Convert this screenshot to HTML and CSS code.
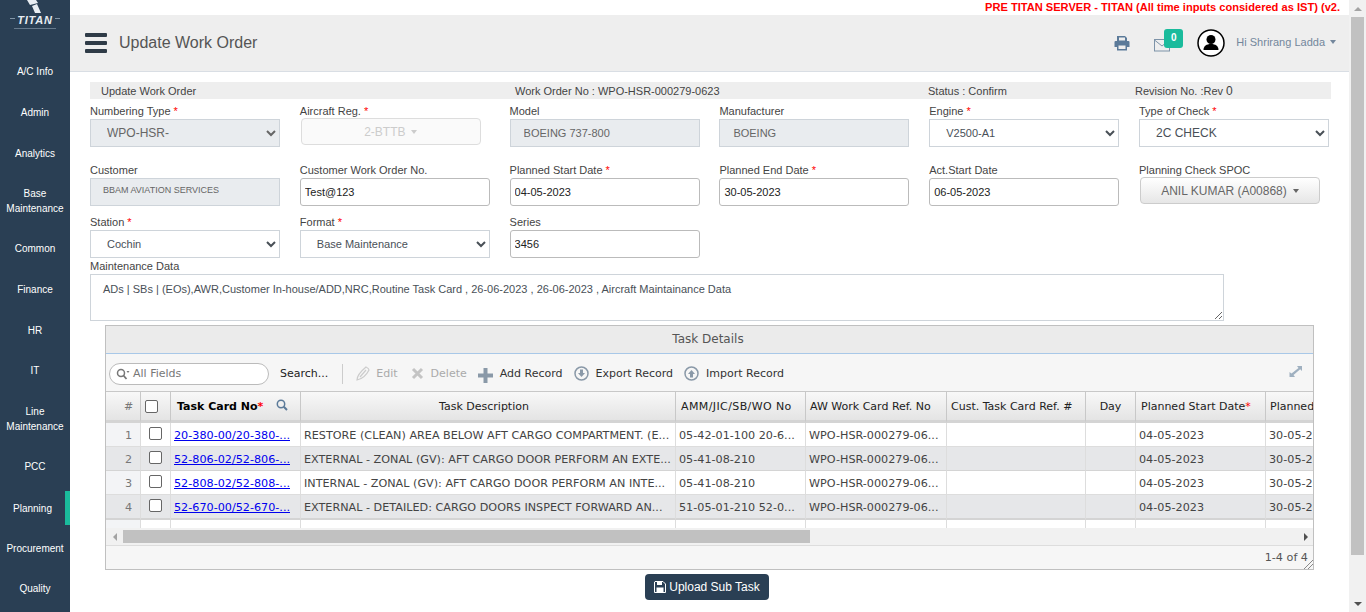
FILE: index.html
```html
<!DOCTYPE html>
<html lang="en">
<head>
<meta charset="UTF-8">
<title>Update Work Order</title>
<link rel="stylesheet" href="styles.css">
</head>
<body>
<div class="app">
  <aside class="sidebar">
    <div class="logo">
      <svg class="logo-mark" width="14" height="13" viewBox="0 0 14 13"><path d="M0 0h9l2 3-8 2zM5 6l5-2 4 9H8z" fill="#e8edf2"/></svg>
      <div class="logo-text">TITAN</div>
      <div class="logo-tag"></div>
    </div>
    <nav class="nav">
      <a class="nav-item">A/C Info</a>
      <a class="nav-item">Admin</a>
      <a class="nav-item">Analytics</a>
      <a class="nav-item nav-double">Base<br>Maintenance</a>
      <a class="nav-item">Common</a>
      <a class="nav-item">Finance</a>
      <a class="nav-item">HR</a>
      <a class="nav-item">IT</a>
      <a class="nav-item nav-double">Line<br>Maintenance</a>
      <a class="nav-item">PCC</a>
      <a class="nav-item active">Planning</a>
      <a class="nav-item">Procurement</a>
      <a class="nav-item">Quality</a>
    </nav>
  </aside>

  <main class="main">
    <div class="server-note">PRE TITAN SERVER - TITAN (All time inputs considered as IST) (v2.0)</div>
    <header class="topbar">
      <div class="burger"><span></span><span></span><span></span></div>
      <h1 class="page-title">Update Work Order</h1>
      <div class="topbar-right">
        <svg class="print-icon" width="16" height="16" viewBox="0 0 16 16"><path d="M3 1h8l2 2v3H3z" fill="#5b7a99"/><rect x="5" y="2.500" width="6" height="3" fill="#eee"/><path d="M1.500 6h13a1 1 0 0 1 1 1v5h-15V7a1 1 0 0 1 1-1z" fill="#5b7a99"/><rect x="3" y="10" width="10" height="5.500" fill="#5b7a99"/><rect x="4.500" y="10.500" width="7" height="3.500" fill="#eee"/></svg>
        <div class="mail">
          <svg width="16" height="13" viewBox="0 0 16 13"><rect x="0.500" y="0.500" width="15" height="11.500" fill="none" stroke="#7d93a8"/><path d="M0.500 1l7.500 6 7.500-6" fill="none" stroke="#7d93a8"/></svg>
          <span class="badge">0</span>
        </div>
        <svg class="avatar" width="28" height="28" viewBox="0 0 28 28"><circle cx="14" cy="14" r="13" fill="#fff" stroke="#000" stroke-width="1.500"/><circle cx="14" cy="10.500" r="4.500" fill="#000"/><path d="M6.500 21c0-4 3-6 7.500-6s7.500 2 7.500 6z" fill="#000"/></svg>
        <span class="user">Hi Shrirang Ladda</span><span class="caret"></span>
      </div>
    </header>

    <div class="content">
      <div class="info-bar">
        <span>Update Work Order</span>
        <span>Work Order No : WPO-HSR-000279-0623</span>
        <span>Status : Confirm</span>
        <span>Revision No. :Rev <span class="rev">0</span></span>
      </div>

      <div class="form-grid">
        <div class="field">
          <label>Numbering Type <i>*</i></label>
          <select class="control big" disabled><option>WPO-HSR-</option></select>
        </div>
        <div class="field">
          <label>Aircraft Reg. <i>*</i></label>
          <div class="picker picker-off">2-BTTB<span class="caret"></span></div>
        </div>
        <div class="field">
          <label>Model</label>
          <input class="control pad-lg" value="BOEING 737-800" disabled>
        </div>
        <div class="field">
          <label>Manufacturer</label>
          <input class="control pad-lg" value="BOEING" disabled>
        </div>
        <div class="field">
          <label>Engine <i>*</i></label>
          <select class="control"><option>V2500-A1</option></select>
        </div>
        <div class="field">
          <label>Type of Check <i>*</i></label>
          <select class="control big"><option>2C CHECK</option></select>
        </div>

        <div class="field">
          <label>Customer</label>
          <input class="control small" value="BBAM AVIATION SERVICES" disabled>
        </div>
        <div class="field">
          <label>Customer Work Order No.</label>
          <input class="control dark" value="Test@123">
        </div>
        <div class="field">
          <label>Planned Start Date <i>*</i></label>
          <input class="control dark" value="04-05-2023">
        </div>
        <div class="field">
          <label>Planned End Date <i>*</i></label>
          <input class="control dark" value="30-05-2023">
        </div>
        <div class="field">
          <label>Act.Start Date</label>
          <input class="control dark" value="06-05-2023">
        </div>
        <div class="field">
          <label>Planning Check SPOC</label>
          <div class="picker">ANIL KUMAR (A00868)<span class="caret"></span></div>
        </div>

        <div class="field">
          <label>Station <i>*</i></label>
          <select class="control"><option>Cochin</option></select>
        </div>
        <div class="field">
          <label>Format <i>*</i></label>
          <select class="control"><option>Base Maintenance</option></select>
        </div>
        <div class="field">
          <label>Series</label>
          <input class="control dark" value="3456">
        </div>
      </div>

      <div class="data-field">
        <label>Maintenance Data</label>
        <textarea class="data-text">ADs | SBs | (EOs),AWR,Customer In-house/ADD,NRC,Routine Task Card , 26-06-2023 , 26-06-2023 , Aircraft Maintainance Data</textarea>
      </div>

      <section class="panel">
        <div class="panel-title">Task Details</div>
        <div class="toolbar">
          <div class="search">
            <svg width="14" height="12" viewBox="0 0 14 12"><circle cx="5" cy="5" r="3.500" fill="none" stroke="#777" stroke-width="1.500"/><path d="M7.500 7.500L10.500 11" stroke="#777" stroke-width="1.800"/><path d="M10.500 3h3l-1.500 2z" fill="#777"/></svg>
            <span>All Fields</span>
          </div>
          <span class="tool-search">Search...</span>
          <span class="tool-sep"></span>
          <span class="tool off tool-edit">
            <svg width="14" height="15" viewBox="0 0 14 15"><path d="M1 14c0-4 3-8 9-13 2 1 3 2 3 3-3 6-7 9-12 10zM4 11l6-7" fill="none" stroke="#ccc" stroke-width="1.200"/></svg>Edit
          </span>
          <span class="tool off">
            <svg width="13" height="13" viewBox="0 0 13 13"><path d="M2 2l9 9M11 2l-9 9" stroke="#c4c4c4" stroke-width="3"/></svg>Delete
          </span>
          <span class="tool">
            <svg class="plus" width="15" height="15" viewBox="0 0 15 15"><path d="M7.500 0v15M0 7.500h15" stroke="#8a99a8" stroke-width="4"/></svg>Add Record
          </span>
          <span class="tool">
            <svg width="15" height="15" viewBox="0 0 15 15"><circle cx="7.500" cy="7.500" r="6.500" fill="none" stroke="#8a99a8" stroke-width="1.500"/><path d="M6 3.500h3V7h2l-3.500 4L4 7h2z" fill="#8a99a8"/></svg>Export Record
          </span>
          <span class="tool">
            <svg width="15" height="15" viewBox="0 0 15 15"><circle cx="7.500" cy="7.500" r="6.500" fill="none" stroke="#8a99a8" stroke-width="1.500"/><path d="M6 11.500h3V8h2L7.500 4 4 8h2z" fill="#8a99a8"/></svg>Import Record
          </span>
          <svg class="expand" width="15" height="14" viewBox="0 0 15 14"><path d="M9 1h5v5l-1.800-1.800L5.500 10 7 12H1.500V7L3.500 8.500 10.500 3z" fill="#9fb0c0"/></svg>
        </div>

        <div class="grid-wrap">
          <table class="grid">
            <colgroup>
              <col class="c-num"><col class="c-chk"><col class="c-card"><col class="c-desc"><col class="c-amm"><col class="c-aw"><col class="c-cust"><col class="c-day"><col class="c-start"><col class="c-end">
            </colgroup>
            <thead>
              <tr>
                <th class="num">#</th>
                <th class="chk"><span class="box"></span></th>
                <th class="left card-head">Task Card No<i>*</i>
                  <svg width="12" height="12" viewBox="0 0 12 12"><circle cx="5" cy="5" r="3.700" fill="none" stroke="#5b7a99" stroke-width="1.500"/><path d="M7.800 7.800L11 11" stroke="#5b7a99" stroke-width="2"/></svg>
                </th>
                <th class="desc-head">Task Description</th>
                <th class="left wide">AMM/JIC/SB/WO No</th>
                <th class="left">AW Work Card Ref. No</th>
                <th class="left">Cust. Task Card Ref. #</th>
                <th>Day</th>
                <th class="left start-head">Planned Start Date<i>*</i></th>
                <th class="left">Planned End Date</th>
              </tr>
            </thead>
            <tbody>
              <tr>
                <td class="num">1</td><td class="chk"><span class="box"></span></td>
                <td><a href="#">20-380-00/20-380-...</a></td>
                <td>RESTORE (CLEAN) AREA BELOW AFT CARGO COMPARTMENT. (E...</td>
                <td>05-42-01-100 20-6...</td><td>WPO-HSR-000279-06...</td><td></td><td></td>
                <td>04-05-2023</td><td>30-05-2023</td>
              </tr>
              <tr class="alt">
                <td class="num">2</td><td class="chk"><span class="box"></span></td>
                <td><a href="#">52-806-02/52-806-...</a></td>
                <td>EXTERNAL - ZONAL (GV): AFT CARGO DOOR PERFORM AN EXTE...</td>
                <td>05-41-08-210</td><td>WPO-HSR-000279-06...</td><td></td><td></td>
                <td>04-05-2023</td><td>30-05-2023</td>
              </tr>
              <tr>
                <td class="num">3</td><td class="chk"><span class="box"></span></td>
                <td><a href="#">52-808-02/52-808-...</a></td>
                <td>INTERNAL - ZONAL (GV): AFT CARGO DOOR PERFORM AN INTE...</td>
                <td>05-41-08-210</td><td>WPO-HSR-000279-06...</td><td></td><td></td>
                <td>04-05-2023</td><td>30-05-2023</td>
              </tr>
              <tr class="alt last">
                <td class="num">4</td><td class="chk"><span class="box"></span></td>
                <td><a href="#">52-670-00/52-670-...</a></td>
                <td>EXTERNAL - DETAILED: CARGO DOORS INSPECT FORWARD AN...</td>
                <td>51-05-01-210 52-0...</td><td>WPO-HSR-000279-06...</td><td></td><td></td>
                <td>04-05-2023</td><td>30-05-2023</td>
              </tr>
              <tr class="filler">
                <td class="num"></td><td></td><td></td><td></td><td></td><td></td><td></td><td></td><td></td><td></td>
              </tr>
            </tbody>
          </table>
        </div>

        <div class="hscroll">
          <span class="arrow arrow-left"></span>
          <div class="hscroll-track"><div class="hscroll-thumb"></div></div>
          <span class="arrow arrow-right"></span>
        </div>
        <div class="panel-foot">1-4 of 4</div>
        <svg class="grip" width="9" height="9" viewBox="0 0 9 9"><path d="M0 9l9-9M4 9l5-5" stroke="#888"/></svg>
      </section>

      <div class="actions">
        <button class="upload">
          <svg width="12" height="12" viewBox="0 0 12 12"><path d="M1 0.500h8l2.500 2.500v8.500H0.500V1z" fill="none" stroke="#fff"/><rect x="3" y="0.500" width="5" height="3.500" fill="#fff"/><rect x="2.500" y="6.500" width="7" height="5" fill="#fff"/></svg>
          Upload Sub Task
        </button>
      </div>
    </div>
  </main>

  <div class="vscroll">
    <span class="arrow arrow-up"></span>
    <div class="vscroll-thumb"></div>
    <span class="arrow arrow-down"></span>
  </div>
</div>
</body>
</html>
```

FILE: styles.css
```css
* {
  box-sizing: border-box;
}
html, body {
  margin: 0;
  height: 100%;
  overflow: hidden;
}
body {
  font-family: "Liberation Sans", Arial, sans-serif;
  font-size: 12px;
  color: #444;
  background: #fff;
}
.app {
  display: flex;
  height: 612px;
}

/* sidebar */
.sidebar {
  width: 70px;
  flex: none;
  background: #2a3f54;
  color: #fff;
}
.logo {
  height: 51.500px;
  display: flex;
  flex-direction: column;
  align-items: center;
}
.logo-mark {
  margin-left: -3px;
}
.logo-text {
  font-size: 11px;
  line-height: 10px;
  font-weight: bold;
  font-style: italic;
  letter-spacing: 0.8px;
  color: #e8edf2;
  margin-top: 2px;
  padding: 0 7px;
  background: linear-gradient(#8194a6, #8194a6) left 3px no-repeat,
    linear-gradient(#8194a6, #8194a6) right 3px no-repeat;
  background-size: 5px 1px;
}
.logo-tag {
  width: 42px;
  height: 1px;
  background: #66798c;
  margin-top: 3px;
}
.nav-item {
  display: flex;
  align-items: center;
  justify-content: center;
  text-align: center;
  height: 40.7px;
  font-size: 10px;
  line-height: 15px;
  color: #fff;
}
.nav-double {
  height: 55px;
}
.nav-item.active {
  border-right: 5px solid #1abb9c;
  height: 34px;
  margin: 4.350px 0 2.350px;
}

/* main column */
.main {
  width: 1279px;
  flex: none;
  display: flex;
  flex-direction: column;
  overflow: hidden;
}
.server-note {
  height: 15px;
  line-height: 15px;
  padding-left: 915px;
  color: #f00;
  font-weight: bold;
  font-size: 11.100px;
  white-space: nowrap;
  overflow: hidden;
  width: 1270px;
}
.topbar {
  height: 57px;
  flex: none;
  background: #eee;
  border-bottom: 1px solid #d9dee4;
  display: flex;
  align-items: center;
  padding-left: 15px;
}
.burger {
  width: 22px;
  display: flex;
  flex-direction: column;
  gap: 4px;
}
.burger span {
  height: 4px;
  background: #2f3b47;
  border-radius: 1px;
}
.page-title {
  margin: 0 0 0 12px;
  font-size: 16px;
  font-weight: normal;
  color: #555;
}
.topbar-right {
  margin-left: auto;
  display: flex;
  align-items: center;
  padding-right: 13px;
}
.print-icon {
  margin-right: 24px;
}
.mail {
  position: relative;
  display: flex;
  margin-right: 27px;
  margin-top: 4px;
}
.badge {
  position: absolute;
  left: 10px;
  top: -10px;
  width: 19px;
  height: 19px;
  background: #1abb9c;
  border-radius: 3px;
  color: #fff;
  font-size: 10px;
  font-weight: bold;
  text-align: center;
  line-height: 18px;
}
.avatar {
  margin-right: 11px;
}
.user {
  font-size: 11px;
  color: #73879c;
  margin-bottom: 3px;
}
.caret {
  display: inline-block;
  border-top: 4px solid currentColor;
  border-left: 3.500px solid transparent;
  border-right: 3.500px solid transparent;
  margin-left: 6px;
  vertical-align: middle;
}
.user + .caret {
  color: #73879c;
  margin-left: 5px;
  margin-bottom: 2px;
}

/* form */
.content {
  padding: 10px 0 0 20px;
}
.info-bar {
  width: 1241px;
  height: 17px;
  background: #eee;
  padding-left: 11px;
  display: grid;
  grid-template-columns: 414px 413px 207px 1fr;
  align-items: center;
  font-size: 11px;
  color: #444;
}
.rev {
  font-size: 12px;
}
.form-grid {
  display: grid;
  grid-template-columns: repeat(6, 190px);
  column-gap: 19.800px;
  width: 1239px;
  margin-top: 4px;
}
.field label, .data-field label {
  display: block;
  font-size: 11px;
  line-height: 16px;
  height: 16px;
  color: #444;
}
.field label i {
  color: #f00;
  font-style: normal;
}
.field {
  height: 59px;
}
.form-grid .field:nth-child(n+7) {
  height: 52px;
}
.form-grid .field:nth-child(n+13) {
  height: 44px;
}
.control {
  display: block;
  width: 100%;
  height: 28px;
  border: 1px solid #ced4da;
  border-radius: 0;
  background: #fff;
  font-family: inherit;
  font-size: 11px;
  color: #495057;
  padding: 0 0 0 12px;
}
.control:disabled {
  background: #e9ecef;
  opacity: 1;
  color: #666;
}
.big {
  font-size: 12px;
}
.pad-lg {
  padding-left: 13px;
}
.small {
  font-size: 9px;
  padding-bottom: 4px;
}
.dark {
  color: #222;
  border: 1px solid #bbb;
  border-radius: 3px;
  padding-left: 4px;
}
.picker {
  width: 180px;
  height: 27px;
  margin: -1px 0 0 1px;
  padding-top: 1px;
  border: 1px solid #ccc;
  border-radius: 4px;
  background: linear-gradient(#fff, #e6e6e6);
  font-size: 12px;
  color: #666;
  display: flex;
  align-items: center;
  justify-content: center;
}
.picker-off {
  background: #fafafa;
  color: #ccc;
  border-color: #ddd;
}
.data-field {
  width: 1134px;
}
.data-text {
  display: block;
  width: 100%;
  height: 47px;
  border: 1px solid #ced4da;
  padding: 8px 12px;
  font-family: inherit;
  font-size: 11px;
  color: #495057;
  resize: vertical;
  border-radius: 0;
}

/* task grid */
.panel {
  width: 1209px;
  height: 245px;
  margin: 4px 0 0 15px;
  border: 1px solid #c0c0c0;
  background: #f6f6f6;
  display: flex;
  flex-direction: column;
  font-family: "DejaVu Sans", Verdana, sans-serif;
  font-size: 11px;
  color: #333;
  position: relative;
}
.panel-title {
  height: 28px;
  background: #ebebeb;
  border-bottom: 1px solid #a8c8e8;
  text-align: center;
  line-height: 26px;
  font-size: 12px;
  color: #555;
  flex: none;
  padding-right: 3px;
}
.toolbar {
  height: 38px;
  flex: none;
  display: flex;
  align-items: center;
  padding: 2px 0 0 3px;
  border-bottom: 1px solid #c8c8c8;
  position: relative;
}
.search {
  width: 160px;
  height: 22px;
  border: 1px solid #bbb;
  border-radius: 11px;
  background: #fff;
  display: flex;
  align-items: center;
  gap: 3px;
  padding-left: 6px;
  color: #777;
}
.tool-search {
  margin-left: 11px;
  color: #222;
}
.tool-sep {
  width: 1px;
  height: 20px;
  background: #ccc;
  margin: 0 13px 0 14px;
}
.tool {
  display: inline-flex;
  align-items: center;
  gap: 7px;
  margin-right: 11px;
  color: #333;
}
.tool.off {
  color: #aaa;
}
.tool-edit {
  gap: 6px;
  margin-right: 13px;
}
.plus {
  margin-top: 3px;
}
.expand {
  position: absolute;
  right: 10px;
  top: 11px;
}
.grid-wrap {
  height: 136px;
  flex: none;
  overflow: hidden;
  background: #fff;
}
.grid {
  table-layout: fixed;
  border-collapse: separate;
  border-spacing: 0;
  width: 1240px;
}
.c-num { width: 35px; }
.c-chk { width: 30px; }
.c-card { width: 130px; }
.c-desc { width: 375px; }
.c-amm { width: 130px; }
.c-aw { width: 141px; }
.c-cust { width: 139px; }
.c-day { width: 50px; }
.c-start { width: 130px; }
.c-end { width: 130px; }
.grid th {
  height: 31px;
  font-weight: normal;
  color: #222;
  background: linear-gradient(#f8f8f8, #e4e4e4);
  border-right: 1px solid #c8c8c8;
  border-bottom: 3px solid #d4d4d4;
  white-space: nowrap;
  overflow: hidden;
  padding: 0 4px;
}
.grid th.left {
  text-align: left;
}
.grid th.wide {
  letter-spacing: 0.4px;
  padding-left: 5px;
}
.grid th.start-head {
  padding-left: 5px;
}
.grid th.desc-head {
  padding-right: 12px;
}
.grid th i {
  color: #f00;
  font-style: normal;
}
.grid th.card-head {
  font-weight: bold;
  color: #000;
  padding-left: 6px;
}
.card-head svg {
  margin-left: 9px;
  vertical-align: -1px;
}
.grid td {
  height: 24px;
  padding: 1px 3px 0;
  border-right: 1px solid #ddd;
  border-bottom: 1px solid #ddd;
  white-space: nowrap;
  overflow: hidden;
  font-size: 11.200px;
  color: #444;
}
.grid a {
  color: #00e;
}
.grid th.num, .grid td.num {
  text-align: center;
  color: #777;
  background: #f3f4f6;
  padding: 1px 0 0 11px;
}
.grid th.num {
  background: linear-gradient(#f8f8f8, #e4e4e4);
  padding-top: 0;
}
.alt td, .grid .alt td.num {
  background: #e6e7e9;
  border-bottom-color: #d4d4d4;
}
.grid .last td {
  height: 25px;
  border-bottom-width: 2px;
}
.grid th.chk {
  text-align: center;
  padding: 0 8px 0 0;
}
.grid td.chk {
  text-align: center;
  padding: 0 0 3px;
}
.box {
  display: inline-block;
  width: 13px;
  height: 13px;
  background: #fff;
  border: 1px solid #666;
  border-radius: 2px;
  vertical-align: middle;
}
.grid .filler td {
  height: 10px;
  border-bottom: 0;
}
.hscroll {
  height: 18px;
  flex: none;
  background: #f1f1f1;
  display: flex;
  align-items: center;
  border-bottom: 1px solid #ddd;
}
.hscroll-track {
  flex: 1;
  height: 13px;
}
.hscroll-thumb {
  width: 687px;
  height: 13px;
  background: #c1c1c1;
}
.arrow {
  display: block;
  width: 0;
  height: 0;
  flex: none;
}
.arrow-left {
  border-top: 4px solid transparent;
  border-bottom: 4px solid transparent;
  border-right: 4px solid #a3a3a3;
  margin: 0 6px 0 7px;
}
.arrow-right {
  border-top: 4px solid transparent;
  border-bottom: 4px solid transparent;
  border-left: 4px solid #505050;
  margin: 0 5px;
}
.panel-foot {
  flex: 1;
  text-align: right;
  padding: 5px 5px 0 0;
  font-size: 11.200px;
  color: #555;
}
.grip {
  position: absolute;
  right: 0;
  bottom: 0;
}

.actions {
  width: 1234px;
  display: flex;
  justify-content: center;
  margin-top: 4px;
}
.upload {
  width: 124px;
  height: 26px;
  border: 0;
  border-radius: 4px;
  background: #2a3f54;
  color: #fff;
  font-family: inherit;
  font-size: 12px;
  display: flex;
  align-items: center;
  justify-content: center;
  gap: 3px;
}

/* page scrollbar */
.vscroll {
  width: 17px;
  flex: none;
  background: #f1f1f1;
  display: flex;
  flex-direction: column;
  align-items: center;
}
.vscroll-thumb {
  width: 13px;
  height: 538px;
  background: #c1c1c1;
  margin-top: 6px;
}
.arrow-up {
  border-left: 4px solid transparent;
  border-right: 4px solid transparent;
  border-bottom: 4px solid #a3a3a3;
  margin-top: 7px;
}
.arrow-down {
  border-left: 4px solid transparent;
  border-right: 4px solid transparent;
  border-top: 4px solid #505050;
  margin-top: auto;
  margin-bottom: 6px;
}
```
